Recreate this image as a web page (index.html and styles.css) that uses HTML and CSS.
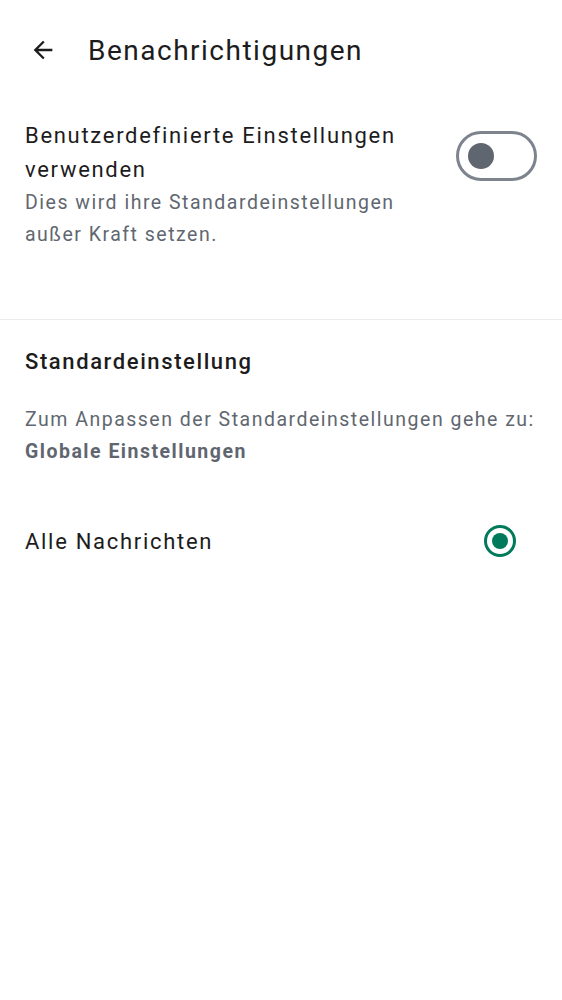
FILE: index.html
```html
<!DOCTYPE html>
<html lang="de">
<head>
<meta charset="utf-8">
<link rel="stylesheet" href="styles.css">
</head>
<body>
<div class="screen">
  <header class="topbar">
    <span class="back">
      <svg width="28" height="28" viewBox="0 0 24 24"><path d="M20 11H7.83l5.59-5.59L12 4l-8 8 8 8 1.41-1.41L7.83 13H20v-2z" fill="#1d1c1d"/></svg>
    </span>
    <h1 class="title">Benachrichtigungen</h1>
  </header>

  <section class="custom">
    <div class="custom-text">
      <div class="label">Benutzerdefinierte Einstellungen verwenden</div>
      <div class="hint">Dies wird ihre Standardeinstellungen außer Kraft setzen.</div>
    </div>
    <div class="toggle"><span class="knob"></span></div>
  </section>

  <div class="divider"></div>

  <section class="defaults">
    <h2 class="section-title">Standardeinstellung</h2>
    <p class="info">Zum Anpassen der Standardeinstellungen gehe zu:<br><b>Globale Einstellungen</b></p>
  </section>

  <div class="option">
    <span class="option-label">Alle Nachrichten</span>
    <span class="radio"><span class="dot"></span></span>
  </div>
</div>
</body>
</html>
```

FILE: styles.css
```css
* { box-sizing: border-box; }
html, body { margin: 0; padding: 0; background: #fff; }
body { font-family: Roboto, "Noto Sans", sans-serif; color: #1d1c1d; }
.screen { width: 562px; }

.topbar { display: flex; align-items: center; height: 100px; padding-left: 29px; }
.back { display: flex; width: 28px; height: 28px; }
.title { margin: 0 0 0 31px; font-size: 28px; font-weight: 400; letter-spacing: 1.5px; color: #1d1c1d; }

.custom { display: flex; align-items: flex-start; justify-content: space-between; padding: 19px 25px 0 25px; height: 219px; }
.custom-text { width: 385px; }
.label { font-size: 22px; line-height: 34px; letter-spacing: 1.7px; }
.hint { font-size: 19.5px; line-height: 32px; letter-spacing: 1.5px; color: #616770; }
.toggle { width: 81px; height: 50px; border: 3px solid #7d848d; border-radius: 25px; margin-top: 12px; padding-left: 9px; display: flex; align-items: center; flex-shrink: 0; }
.knob { width: 26px; height: 26px; border-radius: 50%; background: #5f6670; }

.divider { height: 1px; background: #ececec; }

.defaults { padding: 26px 25px 0; }
.section-title { margin: 0; font-size: 22px; font-weight: 500; line-height: 32px; letter-spacing: 1.6px; }
.info { margin: 26px 0 0; font-size: 19.5px; line-height: 32px; letter-spacing: 1.5px; color: #616770; }
.info b { font-weight: 700; color: #5f6670; }

.option { display: flex; align-items: center; justify-content: space-between; padding: 0 46px 0 25px; height: 60px; margin-top: 43px; }
.option-label { font-size: 22px; letter-spacing: 1.7px; }
.radio { width: 32px; height: 32px; border-radius: 50%; border: 3.5px solid #007a5a; display: flex; align-items: center; justify-content: center; }
.dot { width: 16px; height: 16px; border-radius: 50%; background: #007a5a; }
```
